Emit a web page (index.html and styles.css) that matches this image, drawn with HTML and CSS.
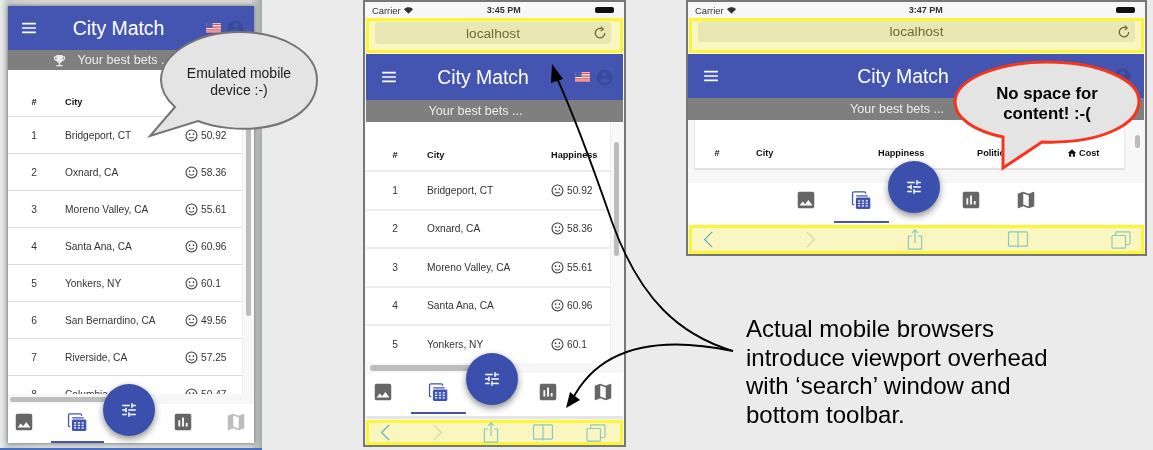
FILE: index.html
```html
<!DOCTYPE html>
<html lang="en">
<head>
    <meta charset="UTF-8">
    <title>viewport overhead</title>
    <link rel="stylesheet" href="styles.css">
</head>
<body>

<svg class="defs" width="0" height="0">
    <symbol id="i-menu" viewBox="0 0 18 14"><path d="M1 2h16M1 7h16M1 12h16" stroke="currentColor" stroke-width="2"/></symbol>
    <symbol id="i-trophy" viewBox="0 0 24 24"><path fill="currentColor" d="M19 5h-2V3H7v2H5C3.9 5 3 5.900 3 7v1c0 2.550 1.920 4.630 4.390 4.940.63 1.500 1.980 2.630 3.610 2.960V19H7v2h10v-2h-4v-3.100c1.630-.33 2.980-1.460 3.610-2.960C19.080 12.630 21 10.550 21 8V7c0-1.100-.9-2-2-2zM5 8V7h2v3.820C5.840 10.400 5 9.300 5 8zm14 0c0 1.300-.84 2.400-2 2.820V7h2v1z"/></symbol>
    <symbol id="i-flag" viewBox="0 0 16 11">
        <rect width="16" height="11" fill="#f3dede"/>
        <path d="M0 1.500h16M0 4.500h16M0 7.500h16M0 10h16" stroke="#d8555f" stroke-width="1.300"/>
        <rect width="7" height="5.500" fill="#4a5fa5"/>
    </symbol>
    <symbol id="i-user" viewBox="0 0 24 24"><path fill="currentColor" d="M12 2C6.480 2 2 6.480 2 12s4.480 10 10 10 10-4.480 10-10S17.520 2 12 2zm0 3c1.660 0 3 1.340 3 3s-1.340 3-3 3-3-1.340-3-3 1.340-3 3-3zm0 14.200c-2.500 0-4.710-1.280-6-3.220.03-1.990 4-3.080 6-3.080 1.990 0 5.970 1.090 6 3.080-1.290 1.940-3.500 3.220-6 3.220z"/></symbol>
    <symbol id="i-smile" viewBox="0 0 14 14" fill="none" stroke="currentColor">
        <circle cx="7" cy="7" r="5.900" stroke-width="1.100"/>
        <circle cx="4.900" cy="5.500" r=".9" fill="currentColor" stroke="none"/>
        <circle cx="9.100" cy="5.500" r=".9" fill="currentColor" stroke="none"/>
        <path d="M4.200 8.500c1.400 1.800 4.200 1.800 5.600 0" stroke-width="1"/>
    </symbol>
    <symbol id="i-meh" viewBox="0 0 14 14" fill="none" stroke="currentColor">
        <circle cx="7" cy="7" r="5.900" stroke-width="1.100"/>
        <circle cx="4.900" cy="5.500" r=".9" fill="currentColor" stroke="none"/>
        <circle cx="9.100" cy="5.500" r=".9" fill="currentColor" stroke="none"/>
        <path d="M4.500 9.400h5" stroke-width="1"/>
    </symbol>
    <symbol id="i-photo" viewBox="0 0 24 24"><path fill="currentColor" d="M21 19V5c0-1.100-.9-2-2-2H5c-1.100 0-2 .9-2 2v14c0 1.100.9 2 2 2h14c1.100 0 2-.9 2-2zM8.500 13.500l2.500 3.010L14.500 12l4.500 6H5l3.500-4.500z"/></symbol>
    <symbol id="i-calc" viewBox="-1 -1 26 26">
        <path d="M4 17.500h-.5a1.500 1.500 0 0 1-1.500-1.500V4a1.500 1.500 0 0 1 1.500-1.500H16a1.500 1.500 0 0 1 1.500 1.500v.5" fill="none" stroke="currentColor" stroke-width="1.500"/>
        <path d="M7 7.500v-.5h13" fill="none" stroke="currentColor" stroke-width="1.500"/>
        <rect x="6" y="9" width="17" height="13.500" rx="1.500" fill="currentColor"/>
        <path d="M8.500 13h2.500M13 13h2.500M17.500 13h2.500M8.500 16h2.500M13 16h2.500M17.500 16h2.500M8.500 19h2.500M13 19h2.500M17.500 19h2.500" stroke="#fff" stroke-width="1.500"/>
    </symbol>
    <symbol id="i-chart" viewBox="0 0 24 24"><path fill="currentColor" d="M19 3H5c-1.100 0-2 .9-2 2v14c0 1.100.9 2 2 2h14c1.100 0 2-.9 2-2V5c0-1.100-.9-2-2-2zM9 17H7v-7h2v7zm4 0h-2V7h2v10zm4 0h-2v-4h2v4z"/></symbol>
    <symbol id="i-map" viewBox="0 0 24 24"><path fill="currentColor" d="M20.500 3l-.16.03L15 5.100 9 3 3.360 4.900c-.21.07-.36.25-.36.48V20.500c0 .28.22.5.5.5l.16-.03L9 18.900l6 2.100 5.640-1.900c.21-.07.36-.25.36-.48V3.500c0-.28-.22-.5-.5-.5zM15 19l-6-2.110V5l6 2.110V19z"/></symbol>
    <symbol id="i-tune" viewBox="0 0 24 24"><path fill="currentColor" d="M3 17v2h6v-2H3zM3 5v2h10V5H3zm10 16v-2h8v-2h-8v-2h-2v6h2zM7 9v2H3v2h4v2h2V9H7zm14 4v-2H11v2h10zm-6-4h2V7h4V5h-4V3h-2v6z"/></symbol>
    <symbol id="i-wifi" viewBox="0 0 14 10"><path fill="currentColor" d="M7 10L0 3c4-4 10-4 14 0z"/></symbol>
    <symbol id="i-reload" viewBox="0 0 14 14" fill="none" stroke="currentColor" stroke-width="1.300"><path d="M9.500 3.200a4.700 4.700 0 1 0 2.200 3.800"/><path d="M7.800 .6l2.600 2.500-2.800 2" stroke-width="1.100"/></symbol>
    <symbol id="i-back" viewBox="0 0 12 20" fill="none" stroke="currentColor" stroke-width="1.300"><path d="M11 1L2 10l9 9"/></symbol>
    <symbol id="i-next" viewBox="0 0 12 20" fill="none" stroke="currentColor" stroke-width="1.300"><path d="M1 1l9 9-9 9"/></symbol>
    <symbol id="i-share" viewBox="0 0 18 24" fill="none" stroke="currentColor" stroke-width="1.400"><path d="M5.500 8H1.500v15h15V8h-4M9 16V1M5.500 4.500L9 1l3.500 3.500"/></symbol>
    <symbol id="i-book" viewBox="0 0 22 18" fill="none" stroke="currentColor" stroke-width="1.300"><rect x="1" y="1" width="20" height="15" rx="1"/><path d="M11 1v16.500"/></symbol>
    <symbol id="i-tabs" viewBox="0 0 22 20" fill="none" stroke="currentColor" stroke-width="1.300"><rect x="1" y="5" width="15" height="14" rx="1"/><path d="M5 5V2a1 1 0 0 1 1-1h14a1 1 0 0 1 1 1v12a1 1 0 0 1-1 1h-4"/></symbol>
    <symbol id="i-home" viewBox="0 0 24 24"><path fill="currentColor" d="M10 21v-7h4v7h5v-9h3L12 3 2 12h3v9z"/></symbol>
</svg>

<div class="desk">

    <div class="backdrop">
        <div class="emulated">
            <div class="app app-emulated">
                <div class="topbar">
                    <svg class="ic-menu"><use href="#i-menu"/></svg>
                    <div class="title">City Match</div>
                    <svg class="ic-flag"><use href="#i-flag"/></svg>
                    <svg class="ic-user"><use href="#i-user"/></svg>
                </div>
                <div class="subbar"><svg class="ic-trophy"><use href="#i-trophy"/></svg>Your best bets ...</div>
                <div class="content">
                    <div class="rows">
                        <div class="row head"><span class="num">#</span><span class="city">City</span><span>Happiness</span></div>
                        <div class="row"><span class="num">1</span><span class="city">Bridgeport, CT</span><span class="score"><svg class="ic-face"><use href="#i-meh"/></svg>50.92</span></div>
                        <div class="row"><span class="num">2</span><span class="city">Oxnard, CA</span><span class="score"><svg class="ic-face"><use href="#i-smile"/></svg>58.36</span></div>
                        <div class="row"><span class="num">3</span><span class="city">Moreno Valley, CA</span><span class="score"><svg class="ic-face"><use href="#i-smile"/></svg>55.61</span></div>
                        <div class="row"><span class="num">4</span><span class="city">Santa Ana, CA</span><span class="score"><svg class="ic-face"><use href="#i-smile"/></svg>60.96</span></div>
                        <div class="row"><span class="num">5</span><span class="city">Yonkers, NY</span><span class="score"><svg class="ic-face"><use href="#i-smile"/></svg>60.1</span></div>
                        <div class="row"><span class="num">6</span><span class="city">San Bernardino, CA</span><span class="score"><svg class="ic-face"><use href="#i-meh"/></svg>49.56</span></div>
                        <div class="row"><span class="num">7</span><span class="city">Riverside, CA</span><span class="score"><svg class="ic-face"><use href="#i-smile"/></svg>57.25</span></div>
                        <div class="row"><span class="num">8</span><span class="city">Columbia, SC</span><span class="score"><svg class="ic-face"><use href="#i-meh"/></svg>50.47</span></div>
                    </div>
                    <div class="hbar"><div class="hthumb"></div></div>
                    <div class="vthumb"></div>
                </div>
                <div class="tabs">
                    <div class="tab"><svg class="ic-tab"><use href="#i-photo"/></svg></div>
                    <div class="tab active"><svg class="ic-tab"><use href="#i-calc"/></svg></div>
                    <div class="tab"></div>
                    <div class="tab"><svg class="ic-tab"><use href="#i-chart"/></svg></div>
                    <div class="tab pale"><svg class="ic-tab"><use href="#i-map"/></svg></div>
                </div>
                <div class="fab"><svg class="ic-tune"><use href="#i-tune"/></svg></div>
            </div>
        </div>
    </div>

    <div class="device device-tall">
        <div class="status">
            <span class="carrier">Carrier <svg class="ic-wifi"><use href="#i-wifi"/></svg></span>
            <span class="clock">3:45 PM</span>
            <span class="battery"></span>
        </div>
        <div class="urlbar">
            <div class="urlpill">localhost<svg class="ic-reload"><use href="#i-reload"/></svg></div>
        </div>
        <div class="app app-tall">
            <div class="topbar">
                <svg class="ic-menu"><use href="#i-menu"/></svg>
                <div class="title">City Match</div>
                <svg class="ic-flag"><use href="#i-flag"/></svg>
                <svg class="ic-user"><use href="#i-user"/></svg>
            </div>
            <div class="subbar">Your best bets ...</div>
            <div class="content">
                <div class="rows">
                    <div class="row head"><span class="num">#</span><span class="city">City</span><span>Happiness</span></div>
                    <div class="row"><span class="num">1</span><span class="city">Bridgeport, CT</span><span class="score"><svg class="ic-face"><use href="#i-meh"/></svg>50.92</span></div>
                    <div class="row"><span class="num">2</span><span class="city">Oxnard, CA</span><span class="score"><svg class="ic-face"><use href="#i-smile"/></svg>58.36</span></div>
                    <div class="row"><span class="num">3</span><span class="city">Moreno Valley, CA</span><span class="score"><svg class="ic-face"><use href="#i-smile"/></svg>55.61</span></div>
                    <div class="row"><span class="num">4</span><span class="city">Santa Ana, CA</span><span class="score"><svg class="ic-face"><use href="#i-smile"/></svg>60.96</span></div>
                    <div class="row"><span class="num">5</span><span class="city">Yonkers, NY</span><span class="score"><svg class="ic-face"><use href="#i-smile"/></svg>60.1</span></div>
                </div>
                <div class="hbar"><div class="hthumb"></div></div>
                <div class="vthumb"></div>
            </div>
            <div class="tabs">
                <div class="tab"><svg class="ic-tab"><use href="#i-photo"/></svg></div>
                <div class="tab active"><svg class="ic-tab"><use href="#i-calc"/></svg></div>
                <div class="tab"></div>
                <div class="tab"><svg class="ic-tab"><use href="#i-chart"/></svg></div>
                <div class="tab"><svg class="ic-tab"><use href="#i-map"/></svg></div>
            </div>
            <div class="fab"><svg class="ic-tune"><use href="#i-tune"/></svg></div>
        </div>
        <div class="toolbar">
            <svg class="ic-back"><use href="#i-back"/></svg>
            <svg class="ic-next"><use href="#i-next"/></svg>
            <svg class="ic-share"><use href="#i-share"/></svg>
            <svg class="ic-book"><use href="#i-book"/></svg>
            <svg class="ic-tabs"><use href="#i-tabs"/></svg>
        </div>
    </div>

    <div class="device device-wide">
        <div class="status">
            <span class="carrier">Carrier <svg class="ic-wifi"><use href="#i-wifi"/></svg></span>
            <span class="clock">3:47 PM</span>
            <span class="battery"></span>
        </div>
        <div class="urlbar">
            <div class="urlpill">localhost<svg class="ic-reload"><use href="#i-reload"/></svg></div>
        </div>
        <div class="app app-wide">
            <div class="topbar">
                <svg class="ic-menu"><use href="#i-menu"/></svg>
                <div class="title">City Match</div>
                <svg class="ic-flag"><use href="#i-flag"/></svg>
                <svg class="ic-user"><use href="#i-user"/></svg>
            </div>
            <div class="subbar">Your best bets ...</div>
            <div class="content">
                <div class="card">
                    <div class="row head"><span class="num">#</span><span class="city">City</span><span>Happiness</span><span>Politics</span><span class="cost"><svg class="ic-home"><use href="#i-home"/></svg>Cost</span></div>
                </div>
                <div class="vthumb"></div>
            </div>
            <div class="tabs">
                <div class="tab"><svg class="ic-tab"><use href="#i-photo"/></svg></div>
                <div class="tab active"><svg class="ic-tab"><use href="#i-calc"/></svg></div>
                <div class="tab"></div>
                <div class="tab"><svg class="ic-tab"><use href="#i-chart"/></svg></div>
                <div class="tab"><svg class="ic-tab"><use href="#i-map"/></svg></div>
            </div>
            <div class="fab"><svg class="ic-tune"><use href="#i-tune"/></svg></div>
        </div>
        <div class="toolbar">
            <svg class="ic-back"><use href="#i-back"/></svg>
            <svg class="ic-next"><use href="#i-next"/></svg>
            <svg class="ic-share"><use href="#i-share"/></svg>
            <svg class="ic-book"><use href="#i-book"/></svg>
            <svg class="ic-tabs"><use href="#i-tabs"/></svg>
        </div>
    </div>

    <svg class="overlay" viewBox="0 0 1153 450">
        <path class="bubble-grey" d="M175 107 L150 136 L198 121 C215 128 240 130 258 128 C295 124 317 105 317 80 C317 52 282 32 239 32 C196 32 161 54 161 80 C161 90 166 99 175 107 Z"/>
        <path class="bubble-red" d="M1003 137 L1003 168 L1042 142 C1100 144 1139 125 1139 101 C1139 79 1098 62 1047 62 C996 62 955 80 955 102 C955 118 974 131 1003 137 Z"/>
        <path class="arrow" d="M733 351 C680 335 640 300 612 222 C594 170 574 115 556 76"/>
        <path class="arrow-head" d="M552 64 L563 79 L551 83 Z"/>
        <path class="arrow" d="M733 351 C680 340 605 335 572 400"/>
        <path class="arrow-head" d="M566 408 L570 392 L580 400 Z"/>
    </svg>

    <div class="callout callout-grey">Emulated mobile<br>device :-)</div>
    <div class="callout callout-red">No space for<br>content! :-(</div>

    <div class="note">Actual mobile browsers<br>introduce viewport overhead<br>with ‘search’ window and<br>bottom toolbar.</div>
</div>

</body>
</html>
```

FILE: styles.css
```css
* {
    box-sizing: border-box;
}
body {
    margin: 0;
    font-family: "Liberation Sans", Arial, sans-serif;
    background-color: #ebebeb;
}
svg {
    display: block;
    flex-shrink: 0;
}
.defs {
    position: absolute;
}
.desk {
    position: relative;
    width: 1153px;
    height: 450px;
    overflow: hidden;
    background-color: #ebebeb;
}

/* the three windows sit on a free canvas */
.backdrop {
    position: absolute;
    left: 0;
    top: 0;
    width: 262px;
    height: 450px;
    padding: 6px 8px 5px 8px;
    background: linear-gradient(90deg, #ececec, #c9cbcb 8px, #d6d6d2 40px, #d6d6d2 250px, #a7abad);
    border-bottom: 2px solid #4a6cc4;
}
.emulated {
    display: flex;
    height: 437px;
    box-shadow: 0 0 4px #666;
    filter: blur(0.35px);
}
.device {
    position: absolute;
    top: 0;
    display: flex;
    flex-direction: column;
    background-color: #f7f7f7;
    border: 2px solid #777;
    filter: blur(0.35px);
}
.device-tall {
    left: 363px;
    width: 263px;
    height: 447px;
}
.device-wide {
    left: 686px;
    width: 461px;
    height: 256px;
}

.status {
    position: relative;
    display: flex;
    justify-content: space-between;
    align-items: center;
    height: 16px;
    padding: 0 10px 0 7px;
    font-size: 9.4px;
    color: #333;
}
.carrier {
    display: flex;
    align-items: center;
    gap: 3px;
}
.ic-wifi {
    width: 9px;
    height: 7px;
}
.clock {
    font-weight: bold;
    font-size: 9px;
}
.battery {
    width: 19px;
    height: 6px;
    background-color: #111;
    border-radius: 2px;
}
.urlbar {
    height: 35px;
    margin: 0 1px 1px 1px;
    padding: 1px 6px 6px 6px;
    background-color: #f9f7bf;
    border: 3px solid #fdf436;
}
.device-tall .urlbar {
    padding-right: 9px;
}
.device-wide .urlbar {
    padding-top: 0;
    padding-bottom: 8px;
}
.urlpill {
    display: flex;
    justify-content: center;
    align-items: center;
    position: relative;
    height: 100%;
    font-size: 13.700px;
    color: #6c6c33;
    background-color: #e9e8b4;
    border-radius: 4px;
}
.ic-reload {
    position: absolute;
    right: 4px;
    top: 4px;
    width: 14px;
    height: 14px;
}
.toolbar {
    display: flex;
    justify-content: space-between;
    align-items: center;
    margin: 1px 1px 0 1px;
    background-color: #f9f7bf;
    border: 3px solid #fdf436;
    color: #8ec8c6;
}
.toolbar svg {
    width: 22px;
}
.device-tall .toolbar {
    height: 25px;
    padding: 0 13px 0 5px;
}
.device-wide .toolbar {
    height: 29px;
    padding: 0 9px 0 5px;
    margin-top: 1px;
}
.ic-back {
    height: 17px;
    color: #56a9cf;
}
.ic-next {
    height: 17px;
    color: #d3d6ab;
}
.ic-share {
    height: 21px;
}
.ic-book {
    height: 17px;
}
.ic-tabs {
    height: 18px;
}

/* city match app */
.app {
    position: relative;
    display: flex;
    flex-direction: column;
    flex: 1;
    min-width: 0;
    min-height: 0;
    background-color: #fff;
}
.app-tall {
    margin: 0 1px;
}
.app-wide {
    margin-right: 1px;
}
.topbar {
    display: flex;
    align-items: center;
    height: 44px;
    padding: 0 9px 0 13px;
    background-color: #4355b1;
    color: #fff;
    flex-shrink: 0;
}
.app-tall .topbar {
    height: 46px;
    padding-left: 15px;
}
.app-wide .topbar {
    padding-left: 15px;
    padding-right: 12px;
}
.ic-menu {
    width: 16px;
    height: 12px;
}
.title {
    flex: 1;
    padding-right: 6px;
    text-align: center;
    font-size: 19.400px;
}
.ic-flag {
    width: 15px;
    height: 10px;
    margin-right: 5px;
}
.ic-user {
    width: 19px;
    height: 19px;
    color: #3a4a9a;
}
.subbar {
    display: flex;
    justify-content: center;
    align-items: center;
    gap: 10px;
    height: 20px;
    padding-right: 38px;
    font-size: 12.600px;
    color: #ececec;
    background-color: #7f7f7f;
    flex-shrink: 0;
}
.app-tall .subbar,
.app-wide .subbar {
    height: 22px;
}
.ic-trophy {
    width: 15px;
    height: 15px;
}
.content {
    position: relative;
    display: flex;
    flex-direction: column;
    flex: 1;
    min-height: 0;
    background-color: #f8f8f8;
}
.rows {
    flex: 1;
    min-height: 0;
    overflow: hidden;
    background-color: #fff;
    border-right: 1px solid #eee;
}
.row {
    display: grid;
    align-items: center;
    height: 37px;
    font-size: 10.200px;
    color: #333;
    border-bottom: 1px solid #dcdcdc;
}
.row.head {
    align-items: end;
    height: 47px;
    padding-bottom: 9px;
    font-size: 9.200px;
    font-weight: bold;
    color: #111;
}
.num {
    text-align: center;
}
.score {
    display: flex;
    align-items: center;
    gap: 3px;
}
.ic-face {
    width: 13px;
    height: 13px;
}
.app-emulated .rows {
    width: 235px;
}
.app-emulated .row {
    grid-template-columns: 52px 125px 1fr;
}
.app-emulated .city {
    padding-left: 5px;
}
.app-tall .rows {
    width: 245px;
}
.app-tall .row {
    grid-template-columns: 58px 127px 1fr;
    height: 38.500px;
    border-bottom: 2px solid #ececec;
}
.app-tall .row.head {
    height: 50px;
    padding-bottom: 10px;
}
.app-tall .city {
    padding-left: 3px;
}
.hbar {
    display: flex;
    align-items: center;
    height: 10px;
    padding-left: 2px;
    background-color: #f7f7f7;
    flex-shrink: 0;
}
.hthumb {
    width: 100px;
    height: 5px;
    background-color: #bdbdbd;
    border-radius: 3px;
}
.app-tall .hthumb {
    width: 110px;
    margin-left: 2px;
    height: 6px;
}
.vthumb {
    position: absolute;
    width: 5px;
    background-color: #bcbcbc;
    border-radius: 3px;
}
.app-emulated .vthumb {
    left: 238px;
    top: 40px;
    height: 206px;
}
.app-tall .vthumb {
    left: 248px;
    top: 20px;
    height: 114px;
}
.app-wide .vthumb {
    left: 447px;
    top: 15px;
    height: 13px;
}
.card {
    height: 50px;
    margin: 0 19px 0 6px;
    background-color: #fff;
    border: 1px solid #e8e8e8;
    border-top: none;
    border-bottom: 2px solid #e2e2e2;
}
.app-wide .content {
    flex: none;
    height: 63px;
    background-color: #f7f7f7;
}
.app-wide .row {
    grid-template-columns: 44px 139px 99px 90px 1fr;
    height: 47px;
    border-bottom: none;
}
.app-wide .city {
    padding-left: 17px;
}
.cost {
    display: flex;
    align-items: center;
    gap: 2px;
}
.ic-home {
    width: 10px;
    height: 10px;
}
.tabs {
    display: flex;
    justify-content: center;
    flex-shrink: 0;
    height: 40px;
    background-color: #fff;
    color: #666;
}
.app-emulated .tabs {
    height: 39px;
    padding-right: 2px;
}
.app-tall .tabs {
    height: 46px;
    padding-right: 3px;
    padding-bottom: 2px;
    border-bottom: 3px solid #e4e4e4;
}
.tab {
    display: flex;
    justify-content: center;
    align-items: center;
    flex: 0 0 55px;
    padding-bottom: 3px;
}
.app-wide .tab {
    padding-bottom: 6px;
}
.app-emulated .tab {
    flex-basis: 53px;
}
.tab.active {
    color: #3f55b5;
    border-bottom: 2px solid #4355b1;
    padding-bottom: 1px;
}
.app-wide .tab.active {
    padding-bottom: 4px;
}
.tab.pale {
    color: #bdbdbd;
}
.ic-tab {
    width: 22px;
    height: 22px;
}
.fab {
    position: absolute;
    display: flex;
    justify-content: center;
    align-items: center;
    width: 52px;
    height: 52px;
    border-radius: 50%;
    color: #fff;
    background-color: #3b50ac;
    box-shadow: 0 3px 7px rgba(0, 0, 0, 0.45);
}
.app-emulated .fab {
    left: 95px;
    top: 378px;
}
.app-tall .fab {
    left: 100px;
    top: 299px;
}
.app-wide .fab {
    left: 200px;
    top: 107px;
}
.ic-tune {
    width: 18px;
    height: 18px;
}

/* annotations on top of the windows */
.overlay {
    position: absolute;
    left: 0;
    top: 0;
    width: 1153px;
    height: 450px;
}
.bubble-grey {
    fill: #e4e4e4;
    stroke: #757575;
    stroke-width: 2;
}
.bubble-red {
    fill: #e4e4e4;
    stroke: #f5351c;
    stroke-width: 3;
}
.arrow {
    fill: none;
    stroke: #000;
    stroke-width: 1.800;
}
.arrow-head {
    fill: #000;
}
.callout {
    position: absolute;
    text-align: center;
}
.callout-grey {
    left: 161px;
    top: 65px;
    width: 156px;
    font-size: 14px;
    line-height: 17px;
    color: #222;
}
.callout-red {
    left: 955px;
    top: 84px;
    width: 184px;
    font-size: 16.800px;
    font-weight: bold;
    line-height: 20px;
    color: #000;
}
.note {
    position: absolute;
    left: 746px;
    top: 315px;
    font-size: 24px;
    line-height: 28.700px;
    color: #000;
}
```
